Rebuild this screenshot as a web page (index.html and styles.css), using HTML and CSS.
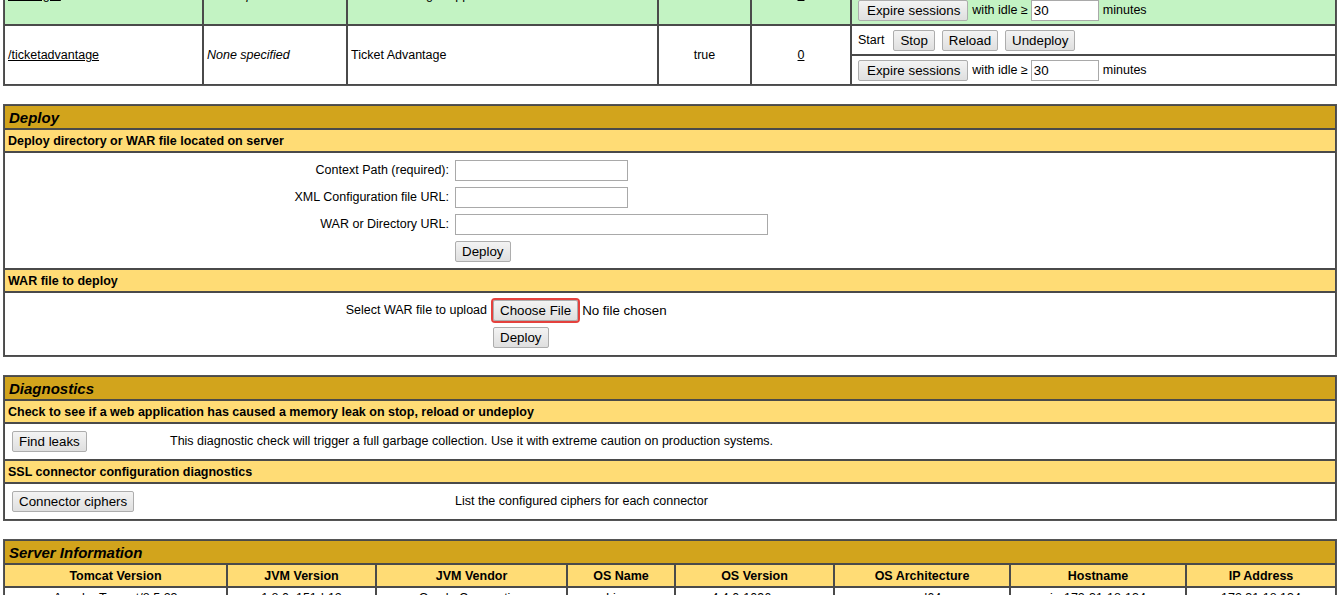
FILE: index.html
```html
<!DOCTYPE html>
<html>
<head>
<meta charset="utf-8">
<title>Tomcat Web Application Manager</title>
<link rel="stylesheet" href="styles.css">
</head>
<body>
<div class="page">

<table class="box apps">
  <colgroup>
    <col class="w-path"><col class="w-ver"><col class="w-name"><col class="w-run"><col class="w-sess"><col>
  </colgroup>
  <tr class="green">
    <td rowspan="2" class="cell-l"><a href="#">/manager</a></td>
    <td rowspan="2" class="cell-l"><i>None specified</i></td>
    <td rowspan="2" class="cell-l">Tomcat Manager Application</td>
    <td rowspan="2" class="cell-c">true</td>
    <td rowspan="2" class="cell-c"><a href="#">1</a></td>
    <td class="cmd"><div class="cmd-row"><span>Start</span><span>Stop</span><span>Reload</span><span>Undeploy</span></div></td>
  </tr>
  <tr class="green">
    <td class="cmd"><div class="cmd-row"><button class="btn wide">Expire sessions</button><span>with idle ≥</span><input class="txt idle" value="30"><span>minutes</span></div></td>
  </tr>
  <tr>
    <td rowspan="2" class="cell-l"><a href="#">/ticketadvantage</a></td>
    <td rowspan="2" class="cell-l"><i>None specified</i></td>
    <td rowspan="2" class="cell-l">Ticket Advantage</td>
    <td rowspan="2" class="cell-c">true</td>
    <td rowspan="2" class="cell-c"><a href="#">0</a></td>
    <td class="cmd"><div class="cmd-row"><span class="start">Start</span><button class="btn">Stop</button><button class="btn">Reload</button><button class="btn">Undeploy</button></div></td>
  </tr>
  <tr>
    <td class="cmd"><div class="cmd-row"><button class="btn wide">Expire sessions</button><span>with idle ≥</span><input class="txt idle" value="30"><span>minutes</span></div></td>
  </tr>
</table>

<table class="box">
  <tr><td class="title">Deploy</td></tr>
  <tr><td class="header">Deploy directory or WAR file located on server</td></tr>
  <tr>
    <td class="form-cell">
      <div class="form-grid server">
        <label class="lbl">Context Path (required):</label><div class="fld"><input class="txt short"></div>
        <label class="lbl">XML Configuration file URL:</label><div class="fld"><input class="txt short"></div>
        <label class="lbl">WAR or Directory URL:</label><div class="fld"><input class="txt long"></div>
        <span></span><div class="fld"><button class="btn">Deploy</button></div>
      </div>
    </td>
  </tr>
  <tr><td class="header">WAR file to deploy</td></tr>
  <tr>
    <td class="form-cell upload-cell">
      <div class="form-grid upload">
        <label class="lbl">Select WAR file to upload</label>
        <div class="fld"><span class="file"><button class="btn choose">Choose File</button><span class="nofile">No file chosen</span></span></div>
        <span></span><div class="fld"><button class="btn">Deploy</button></div>
      </div>
    </td>
  </tr>
</table>

<table class="box">
  <tr><td class="title">Diagnostics</td></tr>
  <tr><td class="header">Check to see if a web application has caused a memory leak on stop, reload or undeploy</td></tr>
  <tr>
    <td class="diag">
      <div class="diag-row leaks"><div><button class="btn">Find leaks</button></div><span class="txt-s">This diagnostic check will trigger a full garbage collection. Use it with extreme caution on production systems.</span></div>
    </td>
  </tr>
  <tr><td class="header">SSL connector configuration diagnostics</td></tr>
  <tr>
    <td class="diag">
      <div class="diag-row ciphers"><div><button class="btn">Connector ciphers</button></div><span class="txt-s">List the configured ciphers for each connector</span></div>
    </td>
  </tr>
</table>

<table class="box info">
  <colgroup>
    <col class="i1"><col class="i2"><col class="i3"><col class="i4"><col class="i5"><col class="i6"><col class="i7"><col>
  </colgroup>
  <tr><td class="title" colspan="8">Server Information</td></tr>
  <tr class="hdr-row">
    <td class="header ctr">Tomcat Version</td>
    <td class="header ctr">JVM Version</td>
    <td class="header ctr">JVM Vendor</td>
    <td class="header ctr">OS Name</td>
    <td class="header ctr">OS Version</td>
    <td class="header ctr">OS Architecture</td>
    <td class="header ctr">Hostname</td>
    <td class="header ctr">IP Address</td>
  </tr>
  <tr>
    <td class="cell-c">Apache Tomcat/8.5.23</td>
    <td class="cell-c">1.8.0_151-b12</td>
    <td class="cell-c">Oracle Corporation</td>
    <td class="cell-c">Linux</td>
    <td class="cell-c">4.4.0-1096-aws</td>
    <td class="cell-c">amd64</td>
    <td class="cell-c">ip-172-31-18-134</td>
    <td class="cell-c">172.31.18.134</td>
  </tr>
</table>

</div>
</body>
</html>
```

FILE: styles.css
```css
* { box-sizing: border-box; }

html, body {
  margin: 0;
  background: #fff;
  color: #000;
  font-family: "Liberation Sans", Arial, sans-serif;
  overflow: hidden;
}

.page {
  margin: -36px 6px 0 3px;
}

a { color: #000; text-decoration: underline; }

table.box {
  width: 100%;
  border-collapse: separate;
  border-spacing: 0;
  border: 1px solid #555;
  margin: 0 0 18px 0;
  table-layout: fixed;
}

table.box td {
  border: 1px solid #4a4a4a;
  padding: 3px;
  font-size: 12.5px;
  line-height: 15px;
}

.w-path { width: 199px; }
.w-ver { width: 144px; }
.w-name { width: 311px; }
.w-run { width: 93px; }
.w-sess { width: 100px; }

.box .green td { background: #c3f3c3; }

.box td.cell-l { text-align: left; vertical-align: middle; }
.box td.cell-c { text-align: center; vertical-align: middle; }

.box td.cmd { padding: 4px 3px 3px 6px; }

.cmd-row {
  display: flex;
  align-items: center;
  gap: 4px;
  height: 21px;
  white-space: nowrap;
}

.cmd-row .start { margin-right: 5px; }
.cmd-row .btn + .btn { margin-left: 3px; }

.btn {
  font-family: "Liberation Sans", Arial, sans-serif;
  font-size: 13.33px;
  height: 21px;
  line-height: 17px;
  padding: 1px 6px;
  border: 1px solid #adadad;
  border-radius: 2px;
  background: linear-gradient(#f3f3f3, #dfdfdf);
  color: #000;
  white-space: nowrap;
}

.btn.wide { padding: 1px 7px 1px 8px; }

.txt {
  font-family: "Liberation Sans", Arial, sans-serif;
  font-size: 13.33px;
  height: 21px;
  padding: 1px 2px;
  border: 1px solid #a9a9a9;
  background: #fff;
  color: #000;
}

.txt.idle { width: 68px; margin: 0 0 0 -1px; }
.txt.short { width: 173px; }
.txt.long { width: 313px; }

.box td.title {
  background: #d2a41c;
  font-size: 15px;
  line-height: 17px;
  font-weight: bold;
  font-style: italic;
  padding: 3px 3px 2px 4px;
}

.box td.header {
  background: #ffdc75;
  font-weight: bold;
  font-size: 12.5px;
  line-height: 16px;
  padding: 3px 3px 2px 3px;
}

.box td.header.ctr { text-align: center; }

.box td.form-cell { padding: 4px 3px 3px 3px; }
.box td.form-cell.upload-cell { padding: 4px 3px 4px 3px; }

.form-grid {
  display: grid;
  align-items: center;
}

.form-grid.server { grid-template-columns: 444px auto; }
.form-grid.upload { grid-template-columns: 482px auto; }

.lbl {
  text-align: right;
  padding: 3px;
  font-size: 12.5px;
  white-space: nowrap;
}

.fld {
  padding: 3px;
  display: flex;
  align-items: center;
}

.file {
  display: inline-flex;
  align-items: center;
  gap: 4px;
}

.btn.choose {
  outline: 2px solid #e4413d;
  outline-offset: 0;
}

.nofile { font-size: 13.33px; }

.box td.diag { padding: 7px 3px 7px 7px; }

.diag-row {
  display: grid;
  align-items: center;
}

.diag-row.leaks { grid-template-columns: 158px auto; }
.diag-row.ciphers { grid-template-columns: 443px auto; }

.txt-s { font-size: 12.5px; white-space: nowrap; }

.i1 { width: 223px; }
.i2 { width: 149px; }
.i3 { width: 191px; }
.i4 { width: 108px; }
.i5 { width: 159px; }
.i6 { width: 176px; }
.i7 { width: 176px; }
```
